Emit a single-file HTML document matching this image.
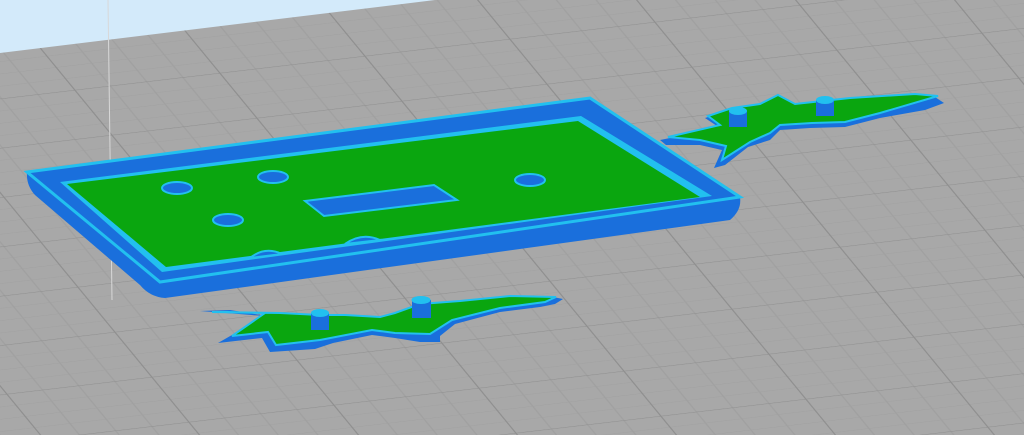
<!DOCTYPE html>
<html><head><meta charset="utf-8"><style>html,body{margin:0;padding:0;background:#a8a8a8;overflow:hidden}svg{display:block}</style></head><body>
<svg width="1024" height="435" viewBox="0 0 1024 435" xmlns="http://www.w3.org/2000/svg">
<defs>
<pattern id="g" patternUnits="userSpaceOnUse" width="100" height="100" patternTransform="matrix(1.45 -0.17 0.37 0.45 0 0)">
<rect width="100" height="100" fill="#a8a8a8"/>
<g stroke="#a0a0a0" stroke-width="1">
<line x1="0" y1="25" x2="100" y2="25"/><line x1="0" y1="50" x2="100" y2="50"/><line x1="0" y1="75" x2="100" y2="75"/>
<line x1="25" y1="0" x2="25" y2="100"/><line x1="50" y1="0" x2="50" y2="100"/><line x1="75" y1="0" x2="75" y2="100"/>
</g>
<g stroke="#909090" stroke-width="2"><line x1="0" y1="0" x2="100" y2="0"/><line x1="0" y1="0" x2="0" y2="100"/></g>
</pattern>
</defs>
<rect width="1024" height="435" fill="url(#g)"/>
<polygon points="0,0 435,0 0,53" fill="#d3eafa"/>
<line x1="108" y1="0" x2="112" y2="300" stroke="#d8d8d8" stroke-width="1"/>

<!-- tray -->
<path d="M27,172 L160,282 L740,197 Q742,210 730,220 L165,298 Q150,297 140,285 L35,195 Q26,185 27,172 Z" fill="#1a6fdc"/>
<polygon points="27,172 590,98 740,197 160,282" fill="#1a6fdc"/>
<polygon points="27,172 590,98 740,197 160,282" fill="none" stroke="#22c0ef" stroke-width="3"/>
<polygon points="60,182 581,116 712,196 162,272" fill="#22c0ef"/>
<polygon points="67,184 578,121 700,197 166,267" fill="#0aa60f"/>
<g fill="#1a6fdc" stroke="#22c0ef" stroke-width="2">
<ellipse cx="177" cy="188" rx="15" ry="6"/>
<ellipse cx="273" cy="177" rx="15" ry="6"/>
<ellipse cx="228" cy="220" rx="15" ry="6"/>
<ellipse cx="530" cy="180" rx="15" ry="6"/>
<polygon points="305,201 434,185 457,200 324,216"/>
<path d="M250,258 Q265,246 282,254 Z"/>
<path d="M345,244 Q362,232 380,240 Z"/>
</g>

<!-- fairy 1 -->
<path d="M660,140 L720,128 L705,118 L730,110 L760,108 L778,98 L790,103 L800,112 L850,102 L910,98 L935,97 L944,103 L925,110 L880,118 L845,127 L810,128 L780,130 L770,140 L748,147 L725,165 L714,168 L722,150 L700,145 L666,145 Z" fill="#1a6fdc"/>
<path d="M668,137 L720,125 L708,116 L732,108 L760,104 L778,95 L795,104 L850,98 L915,94 L938,96 L880,113 L845,122 L812,123 L780,125 L770,133 L750,142 L722,160 L726,146 L700,140 Z" fill="#0aa60f" stroke="#22c0ef" stroke-width="2"/>
<rect x="729" y="111" width="18" height="16" fill="#1a6fdc"/><ellipse cx="738" cy="111" rx="9" ry="4" fill="#22c0ef"/>
<rect x="816" y="100" width="18" height="16" fill="#1a6fdc"/><ellipse cx="825" cy="100" rx="9" ry="4" fill="#22c0ef"/>

<!-- fairy 2 -->
<path d="M200,311 L265,316 L218,343 L262,338 L270,352 L315,349 L333,343 L372,335 L395,338 L420,342 L440,342 L440,336 L455,324 L500,312 L540,307 L555,304 L563,299 L548,296 L510,300 L460,305 L420,308 L395,318 L380,322 L345,321 L320,320 L280,318 L230,310 Z" fill="#1a6fdc"/>
<path d="M212,312 L265,313 L232,336 L268,332 L276,345 L320,340 L372,330 L395,333 L430,334 L452,320 L500,308 L545,302 L556,297 L510,296 L460,301 L420,304 L395,313 L380,317 L345,315 L320,315 L280,313 Z" fill="#0aa60f" stroke="#22c0ef" stroke-width="2"/>
<rect x="311" y="313" width="18" height="17" fill="#1a6fdc"/><ellipse cx="320" cy="313" rx="9" ry="4" fill="#22c0ef"/>
<rect x="412" y="300" width="19" height="18" fill="#1a6fdc"/><ellipse cx="421" cy="300" rx="9.5" ry="4" fill="#22c0ef"/>
</svg>
</body></html>
